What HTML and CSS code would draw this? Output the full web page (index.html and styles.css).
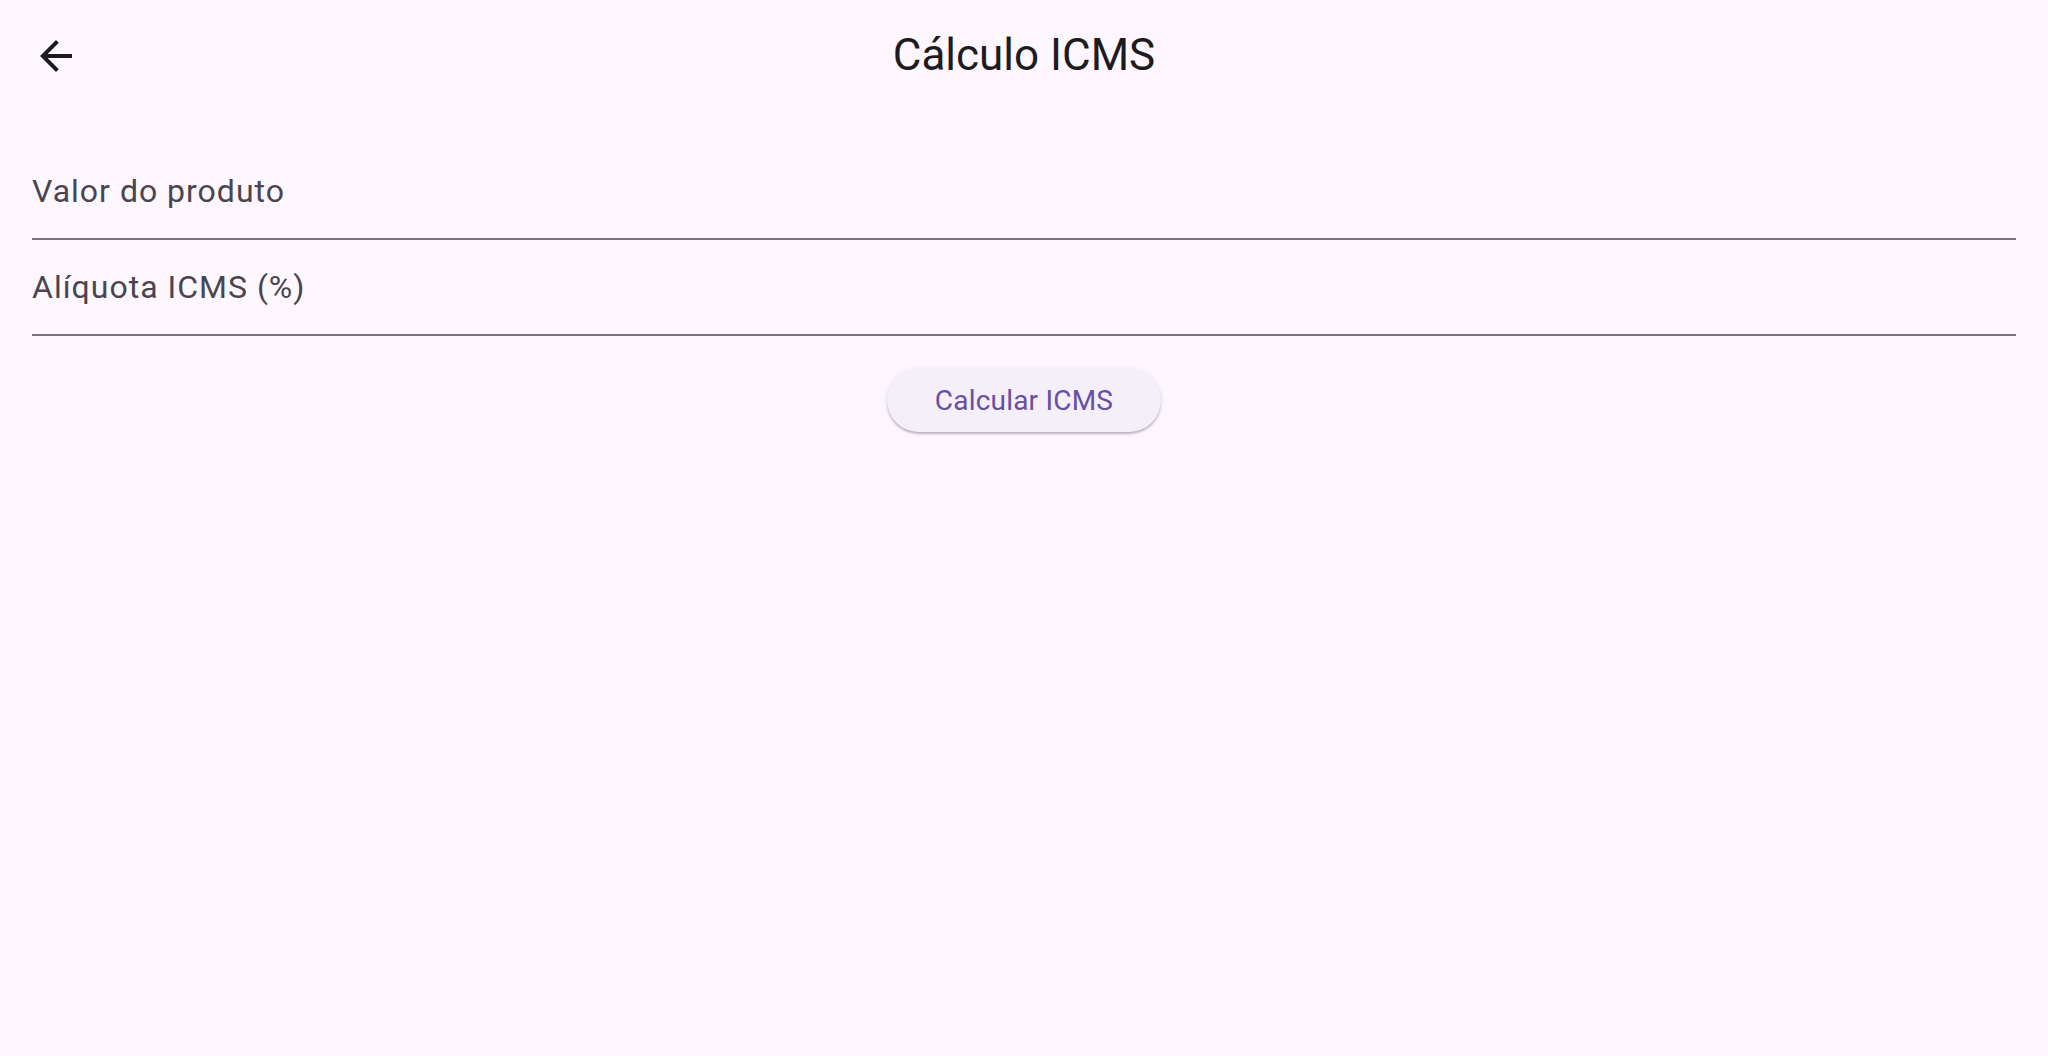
FILE: index.html
```html
<!DOCTYPE html>
<html lang="pt-BR">
<head>
<meta charset="utf-8">
<title>Cálculo ICMS</title>
<link rel="stylesheet" href="styles.css">
</head>
<body>
<header class="app-bar">
  <button class="icon-btn" aria-label="Voltar">
    <svg viewBox="0 0 24 24" width="48" height="48"><path d="M20 11H7.83l5.59-5.59L12 4l-8 8 8 8 1.41-1.41L7.83 13H20v-2z" fill="currentColor"/></svg>
  </button>
  <h1 class="title">Cálculo ICMS</h1>
  <span class="spacer"></span>
</header>
<main class="content">
  <label class="field"><span class="field-label">Valor do produto</span></label>
  <label class="field"><span class="field-label">Alíquota ICMS (%)</span></label>
  <div class="actions">
    <button class="elevated-btn">Calcular ICMS</button>
  </div>
</main>
</body>
</html>
```
FILE: styles.css
```css
html, body {
  margin: 0;
  padding: 0;
  background: #fef7ff;
  font-family: Roboto, "Noto Sans", sans-serif;
  height: 100%;
}

.app-bar {
  display: grid;
  grid-template-columns: 112px 1fr 112px;
  align-items: center;
  height: 112px;
}

.icon-btn {
  display: flex;
  align-items: center;
  justify-content: center;
  width: 112px;
  height: 112px;
  padding: 0;
  border: none;
  background: transparent;
  color: #1d1b20;
}

.title {
  margin: 0 0 2px;
  text-align: center;
  font-weight: 400;
  font-size: 44px;
  line-height: 56px;
  color: #1d1b20;
}

.content {
  display: flex;
  flex-direction: column;
  padding: 32px 32px 0;
}

.field {
  display: block;
  height: 96px;
  box-sizing: border-box;
  padding-top: 23px;
  border-bottom: 2px solid #79747e;
}

.field-label {
  display: block;
  font-size: 32px;
  line-height: 48px;
  letter-spacing: 1px;
  color: #49454f;
}

.actions {
  display: flex;
  justify-content: center;
  padding-top: 32px;
}

.elevated-btn {
  height: 64px;
  width: 274px;
  border: none;
  border-radius: 32px;
  background: #f4eff8;
  color: #6750a4;
  font-family: Roboto, "Noto Sans", sans-serif;
  font-size: 28px;
  font-weight: 400;
  letter-spacing: 0.2px;
  box-shadow: 0 2px 2px rgba(0, 0, 0, 0.22), 0 1px 6px rgba(0, 0, 0, 0.08);
}
```
